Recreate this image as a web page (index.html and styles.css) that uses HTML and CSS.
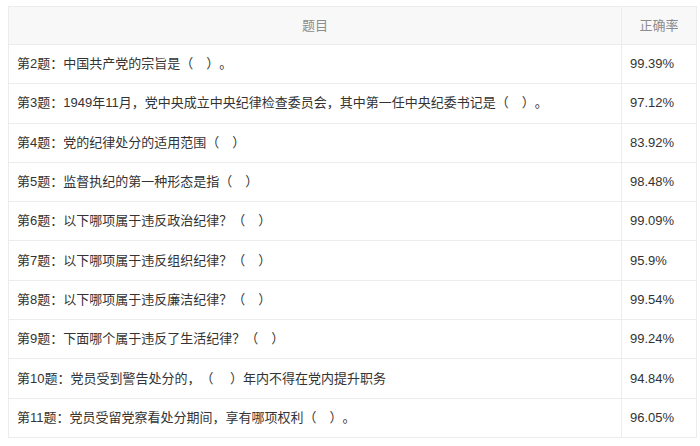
FILE: index.html
```html
<!DOCTYPE html>
<html lang="zh-CN">
<head>
<meta charset="utf-8">
<link rel="stylesheet" href="styles.css">
</head>
<body>
<table class="stats">
  <thead>
    <tr><th class="q">题目</th><th class="r">正确率</th></tr>
  </thead>
  <tbody>
    <tr><td>第2题：中国共产党的宗旨是（　）。</td><td>99.39%</td></tr>
    <tr><td>第3题：1949年11月，党中央成立中央纪律检查委员会，其中第一任中央纪委书记是（　）。</td><td>97.12%</td></tr>
    <tr><td>第4题：党的纪律处分的适用范围（　）</td><td>83.92%</td></tr>
    <tr><td>第5题：监督执纪的第一种形态是指（　）</td><td>98.48%</td></tr>
    <tr><td>第6题：以下哪项属于违反政治纪律？（　）</td><td>99.09%</td></tr>
    <tr><td>第7题：以下哪项属于违反组织纪律？（　）</td><td>95.9%</td></tr>
    <tr><td>第8题：以下哪项属于违反廉洁纪律？（　）</td><td>99.54%</td></tr>
    <tr><td>第9题：下面哪个属于违反了生活纪律？（　）</td><td>99.24%</td></tr>
    <tr><td>第10题：党员受到警告处分的，（　 ）年内不得在党内提升职务</td><td>94.84%</td></tr>
    <tr><td>第11题：党员受留党察看处分期间，享有哪项权利（　）。</td><td>96.05%</td></tr>
  </tbody>
</table>
</body>
</html>
```
FILE: styles.css
```css
html, body {
  margin: 0;
  padding: 0;
  background: #fff;
}
body {
  padding: 6px 3px 0 8px;
  font-family: "Liberation Sans", "Noto Sans CJK SC", sans-serif;
  font-size: 13px;
  color: #333;
  text-spacing-trim: space-all;
}
.stats {
  width: 689px;
  border-collapse: collapse;
  table-layout: fixed;
}
.stats th, .stats td {
  border: 1px solid #ececec;
  line-height: 18px;
  padding: 0 8px;
  text-align: left;
  white-space: nowrap;
}
.stats th {
  background: #f8f8f8;
  color: #8c8c8c;
  font-weight: normal;
  text-align: center;
  height: 37px;
}
.stats td {
  height: 38.3px;
}
.stats .r {
  width: 58px;
}
```
